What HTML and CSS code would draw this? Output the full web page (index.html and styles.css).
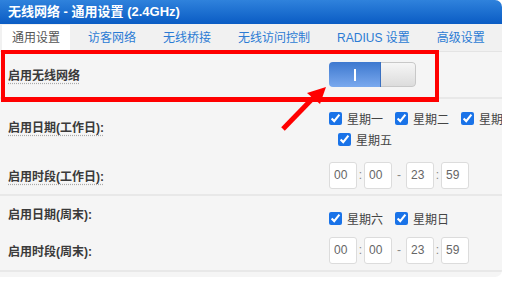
FILE: index.html
```html
<!DOCTYPE html>
<html lang="zh-CN">
<head>
    <meta charset="UTF-8">
    <title>无线网络 - 通用设置</title>
    <link rel="stylesheet" href="styles.css">
</head>
<body>

    <div class="panel">
        <div class="titlebar">无线网络 - 通用设置 (2.4GHz)</div>

        <nav class="tabs">
            <a href="#" class="tab active">通用设置</a>
            <a href="#" class="tab">访客网络</a>
            <a href="#" class="tab">无线桥接</a>
            <a href="#" class="tab">无线访问控制</a>
            <a href="#" class="tab">RADIUS 设置</a>
            <a href="#" class="tab">高级设置</a>
        </nav>

        <!-- enable -->
        <div class="group">
            <div class="row row-enable">
                <span class="label">启用无线网络</span>
                <div class="switch">
                    <span class="switch-on"><i></i></span>
                    <span class="switch-off"></span>
                </div>
            </div>
        </div>

        <!-- working days -->
        <div class="group">
            <div class="row row-days">
                <span class="label">启用日期(工作日):</span>
                <div class="days">
                    <div class="days-line">
                        <label class="day"><input type="checkbox" checked>星期一</label>
                        <label class="day"><input type="checkbox" checked>星期二</label>
                        <label class="day"><input type="checkbox" checked>星期三</label>
                    </div>
                    <div class="days-line wrapped">
                        <label class="day"><input type="checkbox" checked>星期五</label>
                    </div>
                </div>
            </div>
            <div class="row row-time first">
                <span class="label">启用时段(工作日):</span>
                <div class="time">
                    <input type="text" value="00"><span class="sep">:</span><input type="text" value="00">
                    <span class="dash">-</span>
                    <input type="text" value="23"><span class="sep">:</span><input type="text" value="59">
                </div>
            </div>
        </div>

        <!-- weekend -->
        <div class="group">
            <div class="row row-weekend">
                <span class="label">启用日期(周末):</span>
                <div class="days">
                    <div class="days-line">
                        <label class="day"><input type="checkbox" checked>星期六</label>
                        <label class="day"><input type="checkbox" checked>星期日</label>
                    </div>
                </div>
            </div>
            <div class="row row-time last">
                <span class="label">启用时段(周末):</span>
                <div class="time">
                    <input type="text" value="00"><span class="sep">:</span><input type="text" value="00">
                    <span class="dash">-</span>
                    <input type="text" value="23"><span class="sep">:</span><input type="text" value="59">
                </div>
            </div>
        </div>
    </div>

    <!-- annotation -->
    <div class="mark-box"></div>
    <svg class="mark-arrow" width="60" height="60" viewBox="270 80 60 60">
        <line x1="283" y1="129" x2="314" y2="97" stroke="#f00" stroke-width="5"/>
        <polygon points="326,87 307,93 320,104" fill="#f00"/>
    </svg>

</body>
</html>
```

FILE: styles.css
```css
body {
    margin: 0;
    padding: 0;
    background-color: #fff;
    font-family: "Liberation Sans", "Noto Sans CJK SC", sans-serif;
    font-size: 12px;
    color: #333;
}

.panel {
    width: 502px;
    height: 277px;
    background-color: #f5f5f5;
    border-radius: 0 7px 7px 0;
    overflow: hidden;
}

.titlebar {
    height: 24px;
    line-height: 23px;
    padding-left: 8px;
    color: #fff;
    font-size: 13px;
    font-weight: bold;
    background: linear-gradient(#2f82dc, #0a5cc4);
}

.tabs {
    display: flex;
    height: 26px;
    padding-top: 1px;
    padding-left: 2px;
    background-color: #f1f1f1;
    border-bottom: 1px solid #e4e4e4;
}

.tab {
    padding: 0 10px;
    margin-right: 7px;
    line-height: 26px;
    text-decoration: none;
    color: #2b7bd4;
    white-space: nowrap;
}

.tab.active {
    background-color: #fff;
    color: #555;
    margin-right: 8px;
    margin-bottom: -1px;
}

.group {
    border-bottom: 2px solid #e8e8e8;
}

.row {
    display: flex;
    align-items: center;
    padding-left: 8px;
}

.label {
    width: 321px;
    flex-shrink: 0;
    font-weight: bold;
    color: #3a3a3a;
}

.row-enable .label,
.row-days .label,
.row-time.first .label {
    text-decoration: underline dotted #aaa;
    text-underline-offset: 3px;
}

.row-enable {
    height: 45px;
}

.switch {
    display: flex;
    width: 87px;
    height: 25px;
    border-radius: 4px;
    overflow: hidden;
}

.switch-on {
    display: flex;
    justify-content: center;
    align-items: center;
    width: 51px;
    background: linear-gradient(#3d78cf, #7aa9ee);
    border-right: 1px solid #3a70c0;
}

.switch-on i {
    display: block;
    width: 2px;
    height: 12px;
    background-color: #fff;
}

.switch-off {
    flex: 1;
    background: linear-gradient(#f6f6f6, #dcdcdc);
    border: 1px solid #c8c8c8;
    border-left: none;
    border-radius: 0 4px 4px 0;
}

.row-days {
    padding-top: 9px;
    height: 45px;
    align-items: flex-start;
}

.row-days .label {
    padding-top: 10px;
}

.days-line {
    display: flex;
    height: 21px;
    align-items: center;
    white-space: nowrap;
}

.days-line.wrapped {
    padding-left: 9px;
}

.day {
    display: flex;
    align-items: center;
    width: 66px;
    flex-shrink: 0;
    color: #444;
}

.day input {
    width: 13px;
    height: 13px;
    margin: 0 5px 0 0;
    accent-color: #1a73e8;
}

.row-time {
    height: 41px;
}

.row-time.first {
    height: 38px;
    padding-top: 3px;
}

.row-time.last {
    height: 40px;
}

.time {
    display: flex;
    align-items: center;
}

.time input {
    box-sizing: border-box;
    width: 28px;
    height: 27px;
    padding: 0 0 0 4px;
    border: 1px solid #dcdcdc;
    border-radius: 3px;
    background-color: #fff;
    font-family: "Liberation Sans", sans-serif;
    font-size: 12px;
    color: #666;
}

.sep {
    width: 7px;
    text-align: center;
    color: #888;
}

.dash {
    width: 14px;
    text-align: center;
    color: #888;
}

.row-weekend {
    height: 32px;
    padding-top: 2px;
}

.row-weekend .days {
    padding-top: 9px;
}

.row-weekend .label {
    padding-bottom: 2px;
}

/* annotation overlay */
.mark-box {
    position: absolute;
    left: 1px;
    top: 50px;
    width: 430px;
    height: 43px;
    border: 4px solid #f00;
    border-bottom-width: 5px;
}

.mark-arrow {
    position: absolute;
    left: 270px;
    top: 80px;
}
```
